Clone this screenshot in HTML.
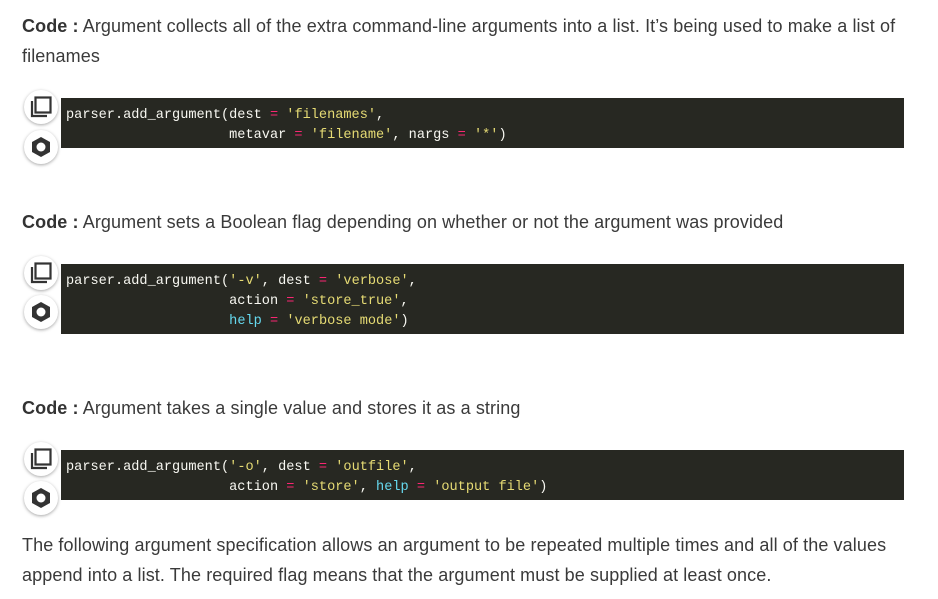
<!DOCTYPE html>
<html><head><meta charset="utf-8"><style>
body{margin:0;width:938px;height:599px;background:#fff;position:relative;overflow:hidden;font-family:"Liberation Sans",sans-serif;color:#3a3a3a}
.t{position:absolute;left:22px;font-size:18px;white-space:nowrap;line-height:30px;letter-spacing:0.1px}
.t b{color:#333}
.code{position:absolute;left:61px;width:843px;background:#272822;}
.code pre{margin:0;padding:8px 0 0 5px;font-family:"Liberation Mono",monospace;font-size:13.6px;line-height:20px;color:#f8f8f2}
.s{color:#e6db74}.o{color:#f92672}.h{color:#66d9ef}
.btn{position:absolute;left:24px;width:34px;height:34px;border-radius:50%;background:#fff;box-shadow:0 1px 3px rgba(0,0,0,.35)}
.btn svg{position:absolute;left:5px;top:5px}
</style></head><body>
<div class="t" style="top:11px"><b>Code :</b> Argument collects all of the extra command-line arguments into a list. It’s being used to make a list of</div>
<div class="t" style="top:41px">filenames</div>

<div class="code" style="top:98px;height:50px"><pre>parser.add_argument(dest <span class="o">=</span> <span class="s">'filenames'</span>,
                    metavar <span class="o">=</span> <span class="s">'filename'</span>, nargs <span class="o">=</span> <span class="s">'*'</span>)</pre></div>
<div class="btn" style="top:90px"><svg width="24" height="24" viewBox="0 0 24 24"><path d="M3 6v15h15" fill="none" stroke="#333" stroke-width="2.2"/><rect x="6.5" y="2.5" width="15" height="15" fill="none" stroke="#333" stroke-width="2.2"/></svg></div>
<div class="btn" style="top:130px"><svg width="24" height="24" viewBox="0 0 24 24"><polygon points="12,2 21,7 21,17 12,22 3,17 3,7" fill="#333"/><circle cx="12" cy="12" r="4.5" fill="#fff"/></svg></div>

<div class="t" style="top:207px"><b>Code :</b> Argument sets a Boolean flag depending on whether or not the argument was provided</div>
<div class="code" style="top:264px;height:70px"><pre>parser.add_argument(<span class="s">'-v'</span>, dest <span class="o">=</span> <span class="s">'verbose'</span>,
                    action <span class="o">=</span> <span class="s">'store_true'</span>,
                    <span class="h">help</span> <span class="o">=</span> <span class="s">'verbose mode'</span>)</pre></div>
<div class="btn" style="top:256px"><svg width="24" height="24" viewBox="0 0 24 24"><path d="M3 6v15h15" fill="none" stroke="#333" stroke-width="2.2"/><rect x="6.5" y="2.5" width="15" height="15" fill="none" stroke="#333" stroke-width="2.2"/></svg></div>
<div class="btn" style="top:295px"><svg width="24" height="24" viewBox="0 0 24 24"><polygon points="12,2 21,7 21,17 12,22 3,17 3,7" fill="#333"/><circle cx="12" cy="12" r="4.5" fill="#fff"/></svg></div>

<div class="t" style="top:393px"><b>Code :</b> Argument takes a single value and stores it as a string</div>
<div class="code" style="top:450px;height:50px"><pre>parser.add_argument(<span class="s">'-o'</span>, dest <span class="o">=</span> <span class="s">'outfile'</span>,
                    action <span class="o">=</span> <span class="s">'store'</span>, <span class="h">help</span> <span class="o">=</span> <span class="s">'output file'</span>)</pre></div>
<div class="btn" style="top:442px"><svg width="24" height="24" viewBox="0 0 24 24"><path d="M3 6v15h15" fill="none" stroke="#333" stroke-width="2.2"/><rect x="6.5" y="2.5" width="15" height="15" fill="none" stroke="#333" stroke-width="2.2"/></svg></div>
<div class="btn" style="top:481px"><svg width="24" height="24" viewBox="0 0 24 24"><polygon points="12,2 21,7 21,17 12,22 3,17 3,7" fill="#333"/><circle cx="12" cy="12" r="4.5" fill="#fff"/></svg></div>

<div class="t" style="top:530px">The following argument specification allows an argument to be repeated multiple times and all of the values</div>
<div class="t" style="top:560px">append into a list. The required flag means that the argument must be supplied at least once.</div>
</body></html>
